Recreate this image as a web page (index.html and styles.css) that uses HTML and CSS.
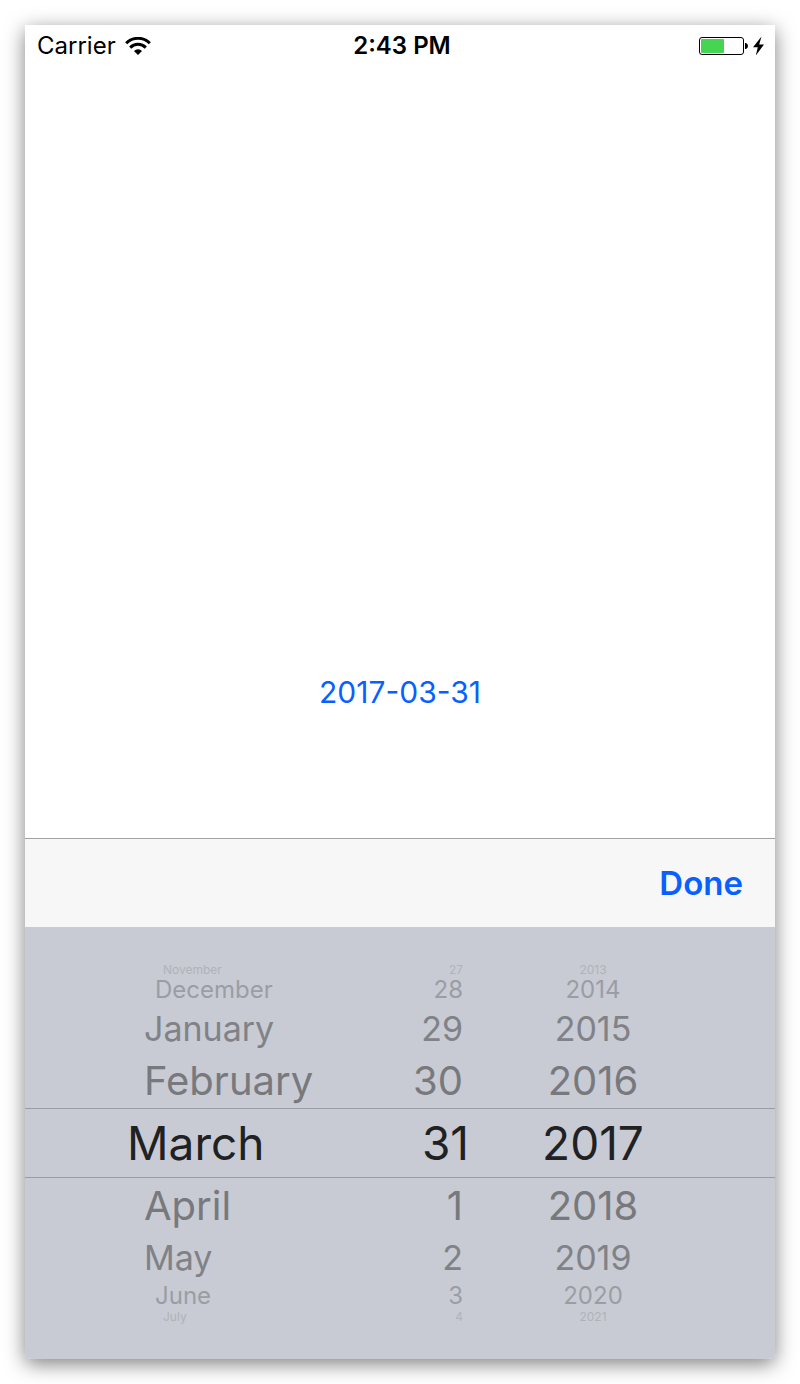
FILE: index.html
```html
<!DOCTYPE html>
<html lang="en">
<head>
<meta charset="utf-8">
<meta name="viewport" content="width=device-width, initial-scale=1">
<title>Date picker</title>
<link rel="stylesheet" href="styles.css">
</head>
<body>
<div class="screen">
  <header class="status">
    <div class="status-left">
      <span>Carrier</span>
      <svg class="wifi" viewBox="0 0 26 18" width="26" height="18" aria-hidden="true">
        <path d="M1.2 6.2a16.6 16.6 0 0 1 23.6 0" fill="none" stroke="#000" stroke-width="3"/>
        <path d="M5.2 10.6a11 11 0 0 1 15.6 0" fill="none" stroke="#000" stroke-width="3"/>
        <path d="M13 18l-4-4.1a5.8 5.8 0 0 1 8 0z"/>
      </svg>
    </div>
    <time class="clock">2:43 PM</time>
    <div class="status-right">
      <svg viewBox="0 0 68 20" width="68" height="20" aria-hidden="true">
        <rect x=".5" y="1.5" width="44" height="17" rx="2.5" fill="#fff" stroke="#000"/>
        <rect x="2" y="3" width="23" height="14" rx="1" fill="#44d552"/>
        <path d="M46 7h1q2 1 2 3t-2 3h-1z"/>
        <path d="M62.5 .5L54 11.2h4.8L56.8 19.5L65 8.4h-4.8z"/>
      </svg>
    </div>
  </header>

  <main class="content">
    <button class="date" type="button">2017-03-31</button>
  </main>

  <div class="toolbar">
    <button class="done" type="button">Done</button>
  </div>

  <form class="picker">
    <fieldset class="wheel months" aria-label="Month">
      <label class="row far"><input type="radio" name="month">November</label>
      <label class="row third"><input type="radio" name="month">December</label>
      <label class="row second"><input type="radio" name="month">January</label>
      <label class="row first"><input type="radio" name="month">February</label>
      <label class="row selected"><input type="radio" name="month" checked>March</label>
      <label class="row first"><input type="radio" name="month">April</label>
      <label class="row second"><input type="radio" name="month">May</label>
      <label class="row third"><input type="radio" name="month">June</label>
      <label class="row far"><input type="radio" name="month">July</label>
    </fieldset>
    <fieldset class="wheel days" aria-label="Day">
      <label class="row far"><input type="radio" name="day">27</label>
      <label class="row third"><input type="radio" name="day">28</label>
      <label class="row second"><input type="radio" name="day">29</label>
      <label class="row first"><input type="radio" name="day">30</label>
      <label class="row selected"><input type="radio" name="day" checked>31</label>
      <label class="row first"><input type="radio" name="day">1</label>
      <label class="row second"><input type="radio" name="day">2</label>
      <label class="row third"><input type="radio" name="day">3</label>
      <label class="row far"><input type="radio" name="day">4</label>
    </fieldset>
    <fieldset class="wheel years" aria-label="Year">
      <label class="row far"><input type="radio" name="year">2013</label>
      <label class="row third"><input type="radio" name="year">2014</label>
      <label class="row second"><input type="radio" name="year">2015</label>
      <label class="row first"><input type="radio" name="year">2016</label>
      <label class="row selected"><input type="radio" name="year" checked>2017</label>
      <label class="row first"><input type="radio" name="year">2018</label>
      <label class="row second"><input type="radio" name="year">2019</label>
      <label class="row third"><input type="radio" name="year">2020</label>
      <label class="row far"><input type="radio" name="year">2021</label>
    </fieldset>
  </form>
</div>
</body>
</html>
```

FILE: styles.css
```css
* {
  box-sizing: border-box;
}

body {
  margin: 0;
  padding: 25px;
  background: #fff;
  color: #000;
  font-family: Inter, Roboto, "Liberation Sans", sans-serif;
}

button {
  border: 0;
  padding: 0;
  background: none;
  color: #0a60ff;
  font-family: inherit;
  cursor: pointer;
}

.screen {
  display: flex;
  flex-direction: column;
  min-height: calc(100vh - 50px);
  overflow: hidden;
  border-radius: 0 0 6px 6px;
  background: #fff;
  box-shadow: 0 5px 20px rgba(0, 0, 0, 0.5);
}

.status {
  display: grid;
  grid-template-columns: 1fr auto 1fr;
  align-items: center;
  height: 42px;
  padding: 0 8px 0 12px;
  font-size: 24px;
  line-height: 42px;
}

.status-left {
  display: flex;
  align-items: center;
  gap: 9px;
}

.status-right {
  display: flex;
  justify-content: flex-end;
}

.clock {
  font-weight: 600;
}

.content {
  display: flex;
  flex: 1;
  align-items: flex-end;
  justify-content: center;
  padding-bottom: 116px;
}

.date {
  height: 60px;
  font-size: 30px;
}

.toolbar {
  display: flex;
  justify-content: flex-end;
  height: 89px;
  padding: 0 32px;
  border-top: 1px solid #a0a1a3;
  background: #f7f7f7;
}

.done {
  font-size: 33px;
  font-weight: 600;
}

.picker {
  display: grid;
  grid-template-columns: 35fr 10fr 30fr;
  padding: 36px 0;
  background: #c8cbd4;
}

.wheel {
  display: flex;
  flex-direction: column;
  min-width: 0;
  margin: 0;
  padding: 0;
  border: 0;
}

.row {
  display: flex;
  align-items: center;
  white-space: nowrap;
  cursor: pointer;
}

.row input {
  appearance: none;
  width: 0;
  height: 0;
  margin: 0;
}

.selected {
  height: 70px;
  border-top: 1px solid #999ca5;
  border-bottom: 1px solid #999ca5;
  color: #1f2123;
  font-size: 46px;
}

.first {
  height: 55px;
  color: #77797d;
  font-size: 40px;
}

.second {
  height: 49px;
  color: #808287;
  font-size: 34px;
}

.third {
  height: 28px;
  color: #9b9da4;
  font-size: 24px;
  line-height: 28px;
}

.far {
  height: 13px;
  color: #b0b2ba;
  font-size: 12px;
  line-height: 13px;
}

.months .row {
  padding-left: 119px;
}

.months .selected {
  padding-left: 102px;
}

.months .third {
  padding-left: 130px;
}

.months .far {
  padding-left: 138px;
}

.days .row {
  justify-content: flex-end;
  padding-right: 12px;
}

.days .selected {
  padding-right: 6px;
}

.years .row {
  justify-content: center;
  padding-right: 64px;
}
```
